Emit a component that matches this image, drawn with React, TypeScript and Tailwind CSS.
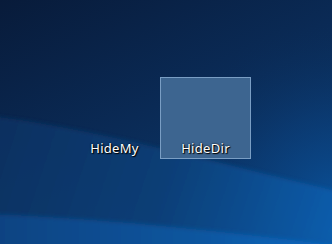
import React from "react";

function Wallpaper() {
  return (
    <svg
      className="absolute inset-0"
      width="332"
      height="244"
      viewBox="0 0 332 244"
      preserveAspectRatio="none"
    >
      <defs>
        <linearGradient id="base" gradientUnits="userSpaceOnUse" x1="0" y1="0" x2="120" y2="244">
          <stop offset="0" stopColor="#081b3a" />
          <stop offset="0.6" stopColor="#0a2a55" />
          <stop offset="1" stopColor="#0b3566" />
        </linearGradient>
        <radialGradient id="glow" gradientUnits="userSpaceOnUse" cx="340" cy="210" r="190">
          <stop offset="0" stopColor="#0a56a2" stopOpacity="0.9" />
          <stop offset="0.5" stopColor="#0a4180" stopOpacity="0.5" />
          <stop offset="1" stopColor="#0a2a55" stopOpacity="0" />
        </radialGradient>
        <linearGradient id="beam1" gradientUnits="userSpaceOnUse" x1="0" y1="120" x2="332" y2="230">
          <stop offset="0" stopColor="#0b3262" />
          <stop offset="0.5" stopColor="#0a4079" />
          <stop offset="1" stopColor="#0a5eae" />
        </linearGradient>
        <linearGradient id="beam2" gradientUnits="userSpaceOnUse" x1="0" y1="0" x2="332" y2="0">
          <stop offset="0" stopColor="#0c4382" />
          <stop offset="0.6" stopColor="#0a569f" />
          <stop offset="1" stopColor="#0a68c0" />
        </linearGradient>
        <filter id="soft" x="-10%" y="-10%" width="120%" height="120%">
          <feGaussianBlur stdDeviation="2" />
        </filter>
      </defs>
      <rect width="332" height="244" fill="url(#base)" />
      <rect width="332" height="244" fill="url(#glow)" />
      <path
        d="M-10 116 C 80 126, 200 158, 340 192 L 340 260 L -10 260 Z"
        fill="url(#beam1)"
        filter="url(#soft)"
        opacity="0.9"
      />
      <path
        d="M-10 214 C 90 218, 200 228, 340 246 L 340 260 L -10 260 Z"
        fill="url(#beam2)"
        filter="url(#soft)"
      />
    </svg>
  );
}

function DesktopIcon({ label, selected }: { label: string; selected?: boolean }) {
  return (
    <div
      className={
        selected
          ? "w-[91px] h-[82px] flex flex-col justify-end items-center pb-[2px] bg-[#3d6590] border border-[#7a9ec4]"
          : "w-[91px] h-[82px] flex flex-col justify-end items-center pb-[2px] border border-transparent"
      }
    >
      <span className="text-[13px] leading-[16px] tracking-[0.3px] text-white font-['Noto_Sans',sans-serif] [text-shadow:1px_1px_1px_#000,0_0_2px_#000]">
        {label}
      </span>
    </div>
  );
}

export default function App() {
  return (
    <div className="relative w-[332px] h-[244px] overflow-hidden bg-[#0a2a55]">
      <Wallpaper />
      <div className="relative flex pt-[77px] pl-[69px]">
        <DesktopIcon label="HideMy" />
        <DesktopIcon label="HideDir" selected />
      </div>
    </div>
  );
}
